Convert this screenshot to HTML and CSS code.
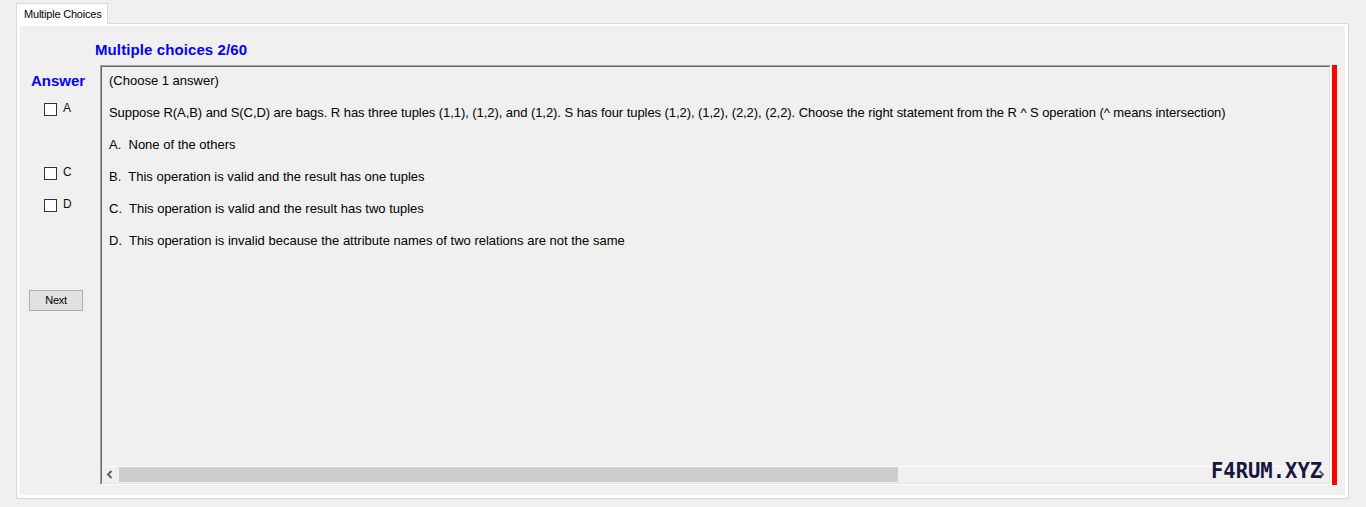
FILE: index.html
```html
<!DOCTYPE html>
<html>
<head>
<meta charset="utf-8">
<link rel="stylesheet" href="styles.css">
</head>
<body>
<div class="tab">Multiple Choices</div>
<div class="panel">
  <div class="panel-inner">
    <div class="left">
      <div class="answer">Answer</div>
      <div class="checks">
        <div class="check"><span class="box"></span><span class="lbl">A</span></div>
        <div class="check hidden"><span class="box"></span><span class="lbl">B</span></div>
        <div class="check"><span class="box"></span><span class="lbl">C</span></div>
        <div class="check"><span class="box"></span><span class="lbl">D</span></div>
      </div>
      <div class="btn">Next</div>
    </div>
    <div class="right">
      <div class="title">Multiple choices 2/60</div>
      <div class="qrow">
        <div class="qbox">
          <div class="qinner">
            <div class="qtext">
              <div class="line">(Choose 1 answer)</div>
              <div class="line long">Suppose R(A,B) and S(C,D) are bags. R has three tuples (1,1), (1,2), and (1,2). S has four tuples (1,2), (1,2), (2,2), (2,2). Choose the right statement from the R ^ S operation (^ means intersection)</div>
              <div class="line">A.  None of the others</div>
              <div class="line">B.  This operation is valid and the result has one tuples</div>
              <div class="line">C.  This operation is valid and the result has two tuples</div>
              <div class="line">D.  This operation is invalid because the attribute names of two relations are not the same</div>
            </div>
            <div class="hscroll">
              <div class="arrow">
                <svg width="17" height="16" viewBox="0 0 17 16"><path d="M9.5 4 L6 7.5 L9.5 11" fill="none" stroke="#606060" stroke-width="2"/></svg>
              </div>
              <div class="thumb"></div>
              <div class="track"></div>
              <div class="arrow">
                <svg width="17" height="16" viewBox="0 0 17 16"><path d="M7.5 4 L11 7.5 L7.5 11" fill="none" stroke="#606060" stroke-width="2"/></svg>
              </div>
            </div>
          </div>
        </div>
        <div class="redbar"></div>
      </div>
    </div>
  </div>
</div>
<div class="watermark">F4RUM.XYZ</div>
</body>
</html>
```
FILE: styles.css
```css
html, body {
  margin: 0;
  padding: 0;
}
body {
  background: #f0f0f0;
  width: 1366px;
  height: 507px;
  padding: 3px 0 0 16px;
  box-sizing: border-box;
  font-family: "Liberation Sans", Arial, sans-serif;
  color: #000;
  overflow: hidden;
}
.tab {
  width: 92px;
  height: 21px;
  box-sizing: border-box;
  background: #fff;
  border: 1px solid #d9d9d9;
  border-bottom: 1px solid #fff;
  font-size: 11px;
  line-height: 13px;
  padding: 4px 0 0 7px;
  letter-spacing: -0.2px;
  margin-bottom: -1px;
  position: relative;
  z-index: 1;
}
.panel {
  width: 1333px;
  height: 476px;
  box-sizing: border-box;
  border: 1px solid #d9d9d9;
  background: #fff;
  padding: 2px 3px 3px 3px;
}
.panel-inner {
  background: #f0f0f0;
  height: 100%;
  display: flex;
}
.left {
  width: 75px;
  flex: none;
  padding-top: 46px;
  display: flex;
  flex-direction: column;
  align-items: flex-start;
}
.answer {
  font-weight: bold;
  font-size: 15px;
  line-height: 18px;
  color: #0000ff;
  padding-left: 11px;
}
.checks {
  margin-top: 13px;
  padding-left: 24px;
}
.check {
  height: 32px;
  display: flex;
  align-items: flex-start;
  gap: 6px;
}
.check.hidden {
  visibility: hidden;
}
.box {
  width: 13px;
  height: 13px;
  box-sizing: border-box;
  border: 1px solid #333;
  background: #fff;
}
.lbl {
  font-size: 12px;
  line-height: 11px;
  color: #111;
}
.btn {
  margin-top: 59px;
  margin-left: 9px;
  width: 54px;
  height: 21px;
  box-sizing: border-box;
  border: 1px solid #adadad;
  background: #e1e1e1;
  font-size: 11px;
  line-height: 19px;
  text-align: center;
  letter-spacing: -0.3px;
}
.right {
  flex: 1;
  display: flex;
  flex-direction: column;
  padding: 15px 8px 10px 0;
}
.title {
  font-weight: bold;
  font-size: 15px;
  line-height: 18px;
  color: #0000ff;
  letter-spacing: 0.1px;
}
.qrow {
  flex: 1;
  margin-top: 6px;
  margin-left: 5px;
  display: flex;
  gap: 1px;
}
.qbox {
  flex: 1;
  border: 1px solid;
  border-color: #a0a0a0 #fff #fff #a0a0a0;
  display: flex;
}
.qinner {
  flex: 1;
  border: 1px solid;
  border-color: #696969 #e3e3e3 #e3e3e3 #696969;
  display: flex;
  flex-direction: column;
}
.qtext {
  flex: 1;
  padding: 6px 0 0 7px;
  font-size: 13px;
  line-height: 16px;
  overflow: hidden;
}
.line {
  margin-bottom: 16px;
  white-space: pre;
}
.line.long {
  letter-spacing: -0.06px;
}
.hscroll {
  height: 17px;
  box-sizing: border-box;
  border-top: 1px solid #fff;
  display: flex;
  background: #f0f0f0;
}
.arrow {
  width: 17px;
  height: 16px;
  flex: none;
}
.arrow svg {
  display: block;
}
.thumb {
  width: 779px;
  height: 15px;
  background: #cdcdcd;
  flex: none;
}
.track {
  flex: 1;
}
.redbar {
  width: 5px;
  background: #ff0000;
  flex: none;
}
.watermark {
  position: absolute;
  left: 1211px;
  top: 461px;
  font-family: "DejaVu Sans Mono", monospace;
  font-weight: bold;
  font-size: 20.5px;
  line-height: 21px;
  color: #16163e;
}
```
